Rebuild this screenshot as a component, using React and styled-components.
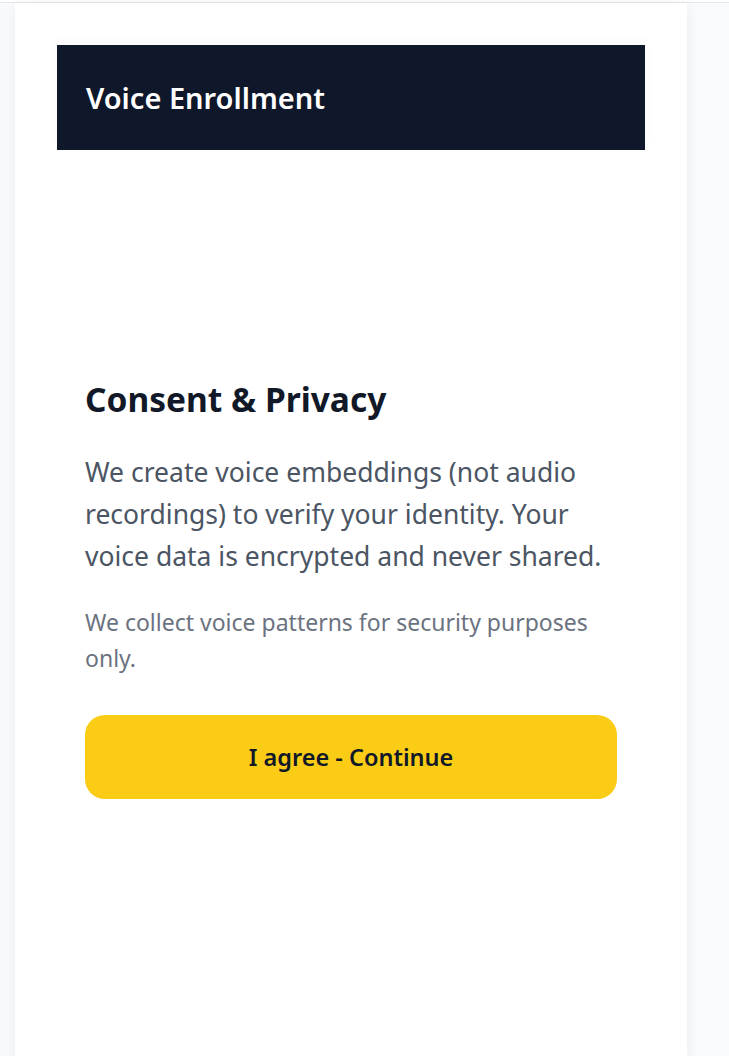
import React from "react";
import styled, { createGlobalStyle } from "styled-components";

const Global = createGlobalStyle`
  html, body { margin: 0; padding: 0; }
  body {
    background: #f9fafb;
    font-family: "Segoe UI", "Noto Sans", "Open Sans", sans-serif;
  }
`;

const Page = styled.div`
  min-height: 1056px;
  border-top: 2px solid #ffffff;
  box-sizing: border-box;
`;

const TopRule = styled.div`
  height: 1px;
  background: #e5e7eb;
`;

const Card = styled.main`
  width: 672px;
  margin-left: 15px;
  min-height: 1060px;
  background: #ffffff;
  box-shadow: 0 0 12px rgba(15, 23, 42, 0.06);
  padding: 42px;
  box-sizing: border-box;
`;

const Header = styled.header`
  background: #0f172a;
  height: 105px;
  padding: 0 29px;
  display: flex;
  align-items: center;
  box-shadow: 0 -4px 10px rgba(15, 23, 42, 0.03);
`;

const Title = styled.h1`
  margin: 0;
  color: #ffffff;
  font-size: 29px;
  font-weight: 600;
  letter-spacing: 0;
`;

const Body = styled.section`
  padding: 228px 28px 0;
  display: flex;
  flex-direction: column;
`;

const Heading = styled.h2`
  margin: 0 0 29px;
  color: #111827;
  font-size: 33.5px;
  font-weight: 700;
  line-height: 1.3;
`;

const Lead = styled.p`
  margin: 0 0 27px;
  color: #4b5563;
  font-size: 26.5px;
  line-height: 42px;
`;

const Note = styled.p`
  margin: 0 0 38px;
  color: #6b7280;
  font-size: 23px;
  line-height: 36.5px;
`;

const Button = styled.button`
  width: 100%;
  height: 84px;
  border: none;
  border-radius: 20px;
  background: #facc15;
  color: #111827;
  font-family: inherit;
  font-size: 23.5px;
  font-weight: 600;
  cursor: pointer;
`;

export default function App() {
  return (
    <>
      <Global />
      <Page>
        <TopRule />
        <Card>
          <Header>
            <Title>Voice Enrollment</Title>
          </Header>
          <Body>
            <Heading>Consent &amp; Privacy</Heading>
            <Lead>
              We create voice embeddings (not audio recordings) to verify your
              identity. Your voice data is encrypted and never shared.
            </Lead>
            <Note>We collect voice patterns for security purposes only.</Note>
            <Button>I agree - Continue</Button>
          </Body>
        </Card>
      </Page>
    </>
  );
}
